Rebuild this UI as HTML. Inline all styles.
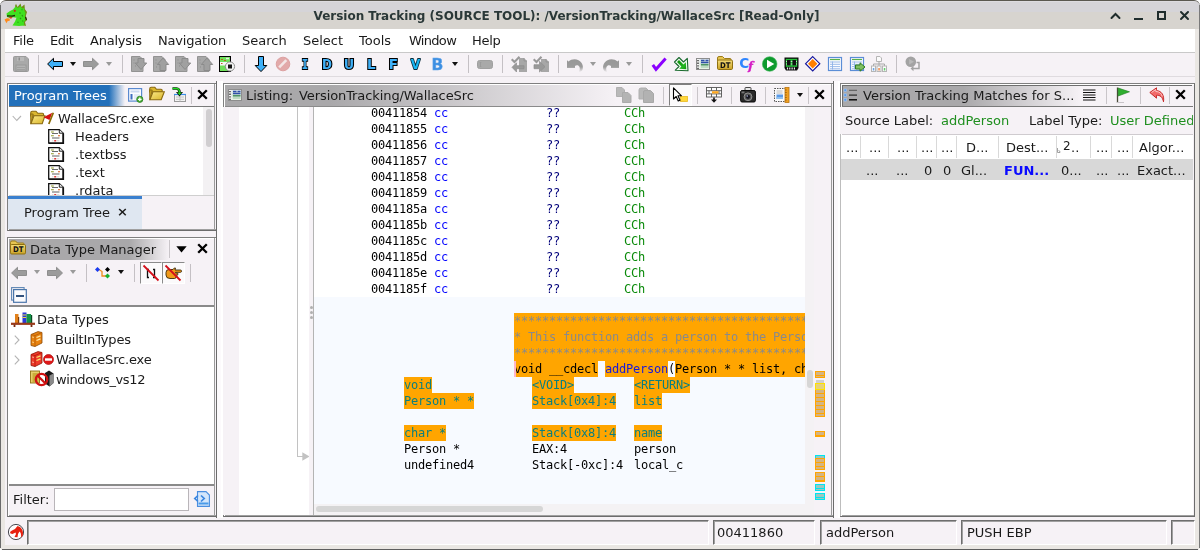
<!DOCTYPE html>
<html>
<head>
<meta charset="utf-8">
<title>Version Tracking (SOURCE TOOL)</title>
<style>
*{box-sizing:border-box;margin:0;padding:0}
html,body{width:1200px;height:550px;overflow:hidden;background:#fff}
body{position:relative;font-family:"DejaVu Sans","Liberation Sans",sans-serif;font-size:13px;color:#1a1a1a;line-height:16px}
div,span,svg{position:absolute}
svg{overflow:visible}
.t{white-space:pre;will-change:transform}
.mono{font-family:"DejaVu Sans Mono","Liberation Mono",monospace;font-size:12px;letter-spacing:-0.225px;white-space:pre;line-height:16px;will-change:transform}
#titlebar{left:0;top:0;width:1200px;height:29px;background:linear-gradient(#dddce0 0,#dddce0 1px,#d5d4d8 1px,#d5d4d8 11px,#d7d4cf 11px,#d7d4cf 100%);border-top:1px solid #5a5850;border-radius:6px 6px 0 0}
#title{left:0;width:1133px;top:8px;text-align:center;font-weight:bold;color:#2a3838;font-size:12px;letter-spacing:-0.020px}
#menubar{left:5px;top:29px;width:1190px;height:23px;background:#fff}
#menuline{left:5px;top:52px;width:1190px;height:1px;background:#c9c9c9}
#toolbar{left:5px;top:53px;width:1190px;height:24px;background:#f6f2f6}
.menu{top:4px}
.vsep{width:1px;background:#c4c0c4;top:55px;height:18px}
.ic{width:16px;height:16px;top:56px}
.dd{width:0;height:0;border-left:3px solid transparent;border-right:3px solid transparent;border-top:4px solid #111;top:62px}
.dd.g{border-top-color:#9a9a9a}
.pn{background:#f6f2f6;border-top:1px solid #7f7f7f;border-left:1px solid #7f7f7f;border-right:1px solid #6c6c6c;border-bottom:1px solid #6c6c6c;box-shadow:inset 1px 1px 0 #fff,inset 0 -1px 0 #a0a0a0}
.white{background:#fff}
.sf{top:520px;height:25px;background:#f6f2f6;border-top:1px solid #6e6e6e;border-left:1px solid #6e6e6e;border-right:1px solid #fff;border-bottom:1px solid #fff;box-shadow:inset 1px 1px 0 #a0a0a0}
</style>
</head>
<body>
<!-- window borders -->
<div style="left:0;top:6px;width:1200px;height:544px;background:#eae7e3;border-radius:0 0 3px 3px"></div>
<div style="left:5px;top:29px;width:1190px;height:516px;background:#f6f2f6"></div>

<div id="titlebar"></div>
<div style="left:0;top:5px;width:1px;height:543px;background:#6a6a6a"></div>
<div style="left:1199px;top:5px;width:1px;height:543px;background:#7a7a7a"></div>
<div style="left:2px;top:549px;width:1196px;height:1px;background:#5e5e5e"></div>
<div id="title" class="t">Version Tracking (SOURCE TOOL): /VersionTracking/WallaceSrc [Read-Only]</div>

<div id="menubar">
<span class="menu t" style="left:8px;letter-spacing:-0.250px">File</span>
<span class="menu t" style="left:45px;letter-spacing:-0.450px">Edit</span>
<span class="menu t" style="left:85px;letter-spacing:-0.220px">Analysis</span>
<span class="menu t" style="left:153px;letter-spacing:-0.200px">Navigation</span>
<span class="menu t" style="left:237px">Search</span>
<span class="menu t" style="left:298px">Select</span>
<span class="menu t" style="left:354px">Tools</span>
<span class="menu t" style="left:404px;letter-spacing:-0.700px">Window</span>
<span class="menu t" style="left:467px;letter-spacing:-0.300px">Help</span>
</div>
<div id="menuline"></div>
<div id="toolbar"></div>
<!-- window icon + controls -->
<svg style="left:4px;top:3px;width:24px;height:24px" viewBox="0 0 24 24">
<path d="M11 3 L12 0.800 L13.500 4 L16.500 0.500 L17.500 4 L20.500 1.500 L20.800 6 L23 9 L21.800 13 L23 17 L21 19 L22 23 L18 22 Z" fill="#6f8f14"/>
<path d="M2.500 10.500 L6 8 L9 6.500 L11.500 3.500 L14 5 L16.500 3 L18 5.500 L20 5 L20.500 8 L21.500 10 L20.800 13.500 L21.500 17 L19.800 19 L20.300 22.500 L15 23 L8.500 22.600 L11 18.500 L12.500 14.800 L9 14.300 L6 15 L3 14 Z" fill="#3fe01f"/>
<path d="M3 12.800 L8 13.200 L11 12.500" fill="none" stroke="#1a2a0a" stroke-width="1.300"/>
<path d="M4.500 13.800 L8.500 14 L7 16 Z" fill="#d8401a"/>
<path d="M0.500 16.500 L3 15.200 L5.500 15.500 L6 17.500 L3.500 18.200 L2.500 20.300 Z" fill="#ff8a1a"/>
<circle cx="10.800" cy="7.800" r="1.100" fill="#c8281a"/>
<path d="M15.500 9.500l1 1M18 12l0.800 1.500M16 15l1 1M13.500 19l1 0.500M18.500 17.500l0.500 1M17.500 6.500l1 0.500" stroke="#2a9a12" stroke-width="1.200"/>
<path d="M21.500 14 l1 3" stroke="#1a1a0a" stroke-width="1.100"/>
</svg>
<svg style="left:1110px;top:11px;width:80px;height:10px" viewBox="0 0 80 10" fill="none" stroke="#1f2d2d" stroke-width="2">
<path d="M1.5 7 L5.5 3 L9.500 7" stroke-linecap="round" stroke-linejoin="miter"/>
<path d="M24 8 H33"/>
<rect x="48" y="1" width="7" height="7"/>
<path d="M71 1 L78 8 M78 1 L71 8" stroke-linecap="round"/>
</svg>
<!-- TOOLBAR -->
<div style="left:5px;top:76px;width:1190px;height:1px;background:#dfdbdf"></div>
<!-- save -->
<svg class="ic" style="left:13px" viewBox="0 0 16 16"><path d="M0.5 1.5 Q0.5 0.5 1.5 0.5 H13 L15.5 3 V14.5 Q15.5 15.5 14.5 15.5 H1.5 Q0.5 15.5 0.5 14.5Z" fill="#a9a9a9" stroke="#9b9b9b"/><rect x="4" y="1" width="7" height="4" fill="#b9b9b9"/><rect x="5.500" y="1.500" width="1.500" height="3" fill="#8d8d8d"/><rect x="3" y="9" width="10" height="6" fill="#b3b3b3" stroke="#949494" stroke-width="0.800"/><path d="M4 11.500 H12 M4 13.500 H12" stroke="#9a9a9a" stroke-width="0.800"/></svg>
<div class="vsep" style="left:38px"></div>
<!-- back / fwd -->
<svg class="ic" style="left:47px" viewBox="0 0 16 16"><path d="M0.600 8 L6.500 2.300 V5.500 H15.500 V10.500 H6.500 V13.700Z" fill="#3fb0f7" stroke="#000" stroke-width="1" stroke-linejoin="miter"/></svg>
<div class="dd" style="left:70px"></div>
<svg class="ic" style="left:83px" viewBox="0 0 16 16"><path d="M15.500 8 L9.500 2.300 V5.500 H0.500 V10.500 H9.500 V13.700Z" fill="#9c9c9c" stroke="#8e8e8e" stroke-width="1"/></svg>
<div class="dd g" style="left:106px"></div>
<div class="vsep" style="left:122px"></div>
<!-- 4 gray doc arrows -->
<svg class="ic" style="left:131px" viewBox="0 0 16 16"><path d="M0.500 0.500 H9 L12 3.500 V15.500 H0.500Z" fill="#a8a8a8" stroke="#939393"/><path d="M7 2.500 H13 V7 H15.700 L10 13.500 L4.300 7 H7Z" fill="#a0a0a0" stroke="#8b8b8b"/><path d="M2.500 4h1M2.500 7h1M4 10h1" stroke="#8d8d8d"/></svg>
<svg class="ic" style="left:153px" viewBox="0 0 16 16"><path d="M0.500 0.500 H9 L12 3.500 V15.500 H0.500Z" fill="#a8a8a8" stroke="#939393"/><path d="M7 14.500 H13 V8.500 H15.700 L10 2 L4.300 8.500 H7Z" fill="#a0a0a0" stroke="#8b8b8b"/><path d="M2.500 4h1M2.500 7h1M3 11h1" stroke="#8d8d8d"/></svg>
<svg class="ic" style="left:175px" viewBox="0 0 16 16"><path d="M0.500 0.500 H9 L12 3.500 V15.500 H0.500Z" fill="#a8a8a8" stroke="#939393"/><path d="M7 2.500 H13 V7 H15.700 L10 13.500 L4.300 7 H7Z" fill="#a0a0a0" stroke="#8b8b8b"/><path d="M2.500 4h1M2.500 7h1M4 10h1" stroke="#8d8d8d"/></svg>
<svg class="ic" style="left:197px" viewBox="0 0 16 16"><path d="M0.500 0.500 H9 L12 3.500 V15.500 H0.500Z" fill="#a8a8a8" stroke="#939393"/><path d="M7 14.500 H13 V8.500 H15.700 L10 2 L4.300 8.500 H7Z" fill="#a0a0a0" stroke="#8b8b8b"/><path d="M2.500 4h1M2.500 7h1M3 11h1" stroke="#8d8d8d"/></svg>
<!-- green page with stop circle -->
<svg class="ic" style="left:219px" viewBox="0 0 16 16"><rect x="0.500" y="0.500" width="11" height="15" fill="#6fe05a" stroke="#000"/><rect x="1" y="6" width="10" height="3.500" fill="#f4f4f4"/><path d="M2 3.500h2M5 4.500h2M2 7.500h1.500" stroke="#b5651d"/><path d="M7 2.500h3" stroke="#e8e8e8" stroke-width="1.500"/><circle cx="11" cy="10.500" r="4.600" fill="#f4f4f4" stroke="#8c8c8c"/><rect x="9" y="8.500" width="4" height="4" fill="#151515"/></svg>
<div class="vsep" style="left:244px"></div>
<!-- down arrow -->
<svg class="ic" style="left:253px" viewBox="0 0 16 16"><path d="M5.500 0.500 H10.500 V9.500 H13.800 L8 15.600 L2.200 9.500 H5.500Z" fill="#3fb0f7" stroke="#000" stroke-width="1"/></svg>
<!-- no entry -->
<svg class="ic" style="left:275px" viewBox="0 0 16 16"><circle cx="8" cy="8" r="6.800" fill="#e2a9a9" stroke="#dba0a0"/><path d="M4.200 11.300 L11.300 4.200" stroke="#f3e6e6" stroke-width="2.600"/></svg>
<!-- letters -->
<svg class="ic" style="left:297px" viewBox="0 0 16 16"><text x="8" y="13" text-anchor="middle" font-family="Liberation Mono,monospace" font-weight="bold" font-size="15.200" fill="#3fb0f7" stroke="#000" stroke-width="2" paint-order="stroke" stroke-linejoin="miter" textLength="6.500" lengthAdjust="spacingAndGlyphs">I</text></svg>
<svg class="ic" style="left:319px" viewBox="0 0 16 16"><text x="8" y="13" text-anchor="middle" font-family="Liberation Mono,monospace" font-weight="bold" font-size="15.200" fill="#3fb0f7" stroke="#000" stroke-width="2" paint-order="stroke" stroke-linejoin="miter" textLength="10" lengthAdjust="spacingAndGlyphs">D</text></svg>
<svg class="ic" style="left:341px" viewBox="0 0 16 16"><text x="8" y="13" text-anchor="middle" font-family="Liberation Mono,monospace" font-weight="bold" font-size="15.200" fill="#3fb0f7" stroke="#000" stroke-width="2" paint-order="stroke" stroke-linejoin="miter" textLength="10" lengthAdjust="spacingAndGlyphs">U</text></svg>
<svg class="ic" style="left:363px" viewBox="0 0 16 16"><text x="8.300" y="13" text-anchor="middle" font-family="DejaVu Sans,Liberation Sans,sans-serif" font-weight="bold" font-size="13.500" fill="#3fb0f7" stroke="#000" stroke-width="2" paint-order="stroke" stroke-linejoin="miter">L</text></svg>
<svg class="ic" style="left:385px" viewBox="0 0 16 16"><text x="8.300" y="13" text-anchor="middle" font-family="DejaVu Sans,Liberation Sans,sans-serif" font-weight="bold" font-size="13.500" fill="#3fb0f7" stroke="#000" stroke-width="2" paint-order="stroke" stroke-linejoin="miter">F</text></svg>
<svg class="ic" style="left:407px" viewBox="0 0 16 16"><text x="8.500" y="13" text-anchor="middle" font-family="DejaVu Sans,Liberation Sans,sans-serif" font-weight="bold" font-size="13.500" fill="#19b5f2" stroke="#0a2d3c" stroke-width="1.800" paint-order="stroke" stroke-linejoin="round" textLength="9.500" lengthAdjust="spacingAndGlyphs">V</text></svg>
<svg class="ic" style="left:429px" viewBox="0 0 16 16"><text x="8.500" y="13.500" text-anchor="middle" font-family="DejaVu Sans,Liberation Sans,sans-serif" font-weight="bold" font-size="15.500" fill="#3d8fe2" stroke="#6aa9ea" stroke-width="0.500">B</text></svg>
<div class="dd" style="left:452px"></div>
<div class="vsep" style="left:468px"></div>
<!-- gray rounded rect -->
<svg class="ic" style="left:477px" viewBox="0 0 16 16"><rect x="0.500" y="4.500" width="15" height="8" rx="2" fill="#a9a9a9" stroke="#a0a0a0"/><path d="M3.500 6.500 v4 M2.800 6.500 h1.500 M2.800 10.500 h1.500" stroke="#989898" stroke-width="0.800"/></svg>
<div class="vsep" style="left:502px"></div>
<!-- check/page arrows (gray) -->
<svg class="ic" style="left:511px" viewBox="0 0 16 16"><path d="M8 2 H13 L16 5 V16 H8Z" fill="#a7a7a7"/><path d="M13 2 V5 H16" fill="none" stroke="#929292" stroke-width="0.800"/><path d="M0.700 3.200 L3.500 6 L8.500 0.800" fill="none" stroke="#999" stroke-width="2.100"/><path d="M1 11.300 L5.500 6.800 V9.700 H13 V12.700 H5.500 V16Z" fill="#999" stroke="#8c8c8c" stroke-width="0.700"/></svg>
<svg class="ic" style="left:533px" viewBox="0 0 16 16"><path d="M8 3 H13 L16 6 V16 H8Z" fill="#a7a7a7"/><path d="M13 3 V6 H16" fill="none" stroke="#929292" stroke-width="0.800"/><path d="M0.700 3.200 L3.500 6 L8.500 0.800" fill="none" stroke="#999" stroke-width="2.100"/><path d="M1 8.700 H6.500 V5.300 L12 10.700 L6.500 16 V12.700 H1Z" fill="#999" stroke="#8c8c8c" stroke-width="0.700"/></svg>
<div class="vsep" style="left:558px"></div>
<!-- undo / redo -->
<svg class="ic" style="left:567px;top:59px;width:16px;height:13px" viewBox="0 0 16 13"><defs><linearGradient id="ug" x1="0" y1="0" x2="0" y2="1"><stop offset="0" stop-color="#979797"/><stop offset="0.600" stop-color="#9c9c9c"/><stop offset="1" stop-color="#9c9c9c" stop-opacity="0.050"/></linearGradient></defs><path d="M0 1.200 L1.600 2.600 C4 0.300 8 -0.500 11.500 1.200 C15 3 16.800 7 15.500 10.500 C15 12 14 12.800 12 13 C13.300 10 13 8 11.500 6.800 C10.500 6 9 6.200 8 7 L8 9 L0 9 Z" fill="url(#ug)"/></svg>
<div class="dd g" style="left:590px"></div>
<svg class="ic" style="left:603px;top:59px;width:16px;height:13px" viewBox="0 0 16 13"><path transform="translate(16,0) scale(-1,1)" d="M0 1.200 L1.600 2.600 C4 0.300 8 -0.500 11.500 1.200 C15 3 16.800 7 15.500 10.500 C15 12 14 12.800 12 13 C13.300 10 13 8 11.500 6.800 C10.500 6 9 6.200 8 7 L8 9 L0 9 Z" fill="url(#ug)"/></svg>
<div class="dd g" style="left:626px"></div>
<div class="vsep" style="left:642px"></div>
<!-- purple check -->
<svg class="ic" style="left:651px" viewBox="0 0 16 16"><path d="M1.800 8.800 L5 13.300 L14.600 2.500" fill="none" stroke="#8b00ff" stroke-width="3" stroke-linecap="butt" stroke-linejoin="miter"/></svg>
<!-- green arrow -->
<svg class="ic" style="left:673px" viewBox="0 0 16 16"><defs><linearGradient id="gg" x1="0" y1="0" x2="1" y2="1"><stop offset="0" stop-color="#0a8a0a"/><stop offset="0.700" stop-color="#22b822"/><stop offset="1" stop-color="#0c960c"/></linearGradient></defs><path d="M6 1.500 L10.500 6 L14.300 2.300 L15 14.800 L2.300 14.200 L6 10.500 L1.500 6 Z" fill="#f2fbf0" stroke="#1a6a2e" stroke-width="1.100" stroke-linejoin="round"/><path d="M6 4 L10.500 8.400 L12.800 6.200 L13.300 13.200 L6.200 12.800 L8.400 10.500 L4 6 Z" fill="url(#gg)"/></svg>
<!-- listing icon -->
<svg class="ic" style="left:695px" viewBox="0 0 16 16"><defs><linearGradient id="lg1" x1="0" y1="0" x2="0" y2="1"><stop offset="0" stop-color="#dfe6ee"/><stop offset="0.500" stop-color="#cfe3d6"/><stop offset="1" stop-color="#eef6ea"/></linearGradient></defs><rect x="1.500" y="2.500" width="13" height="11" fill="url(#lg1)" stroke="#8d8d8d"/><rect x="2" y="3" width="2.500" height="10" fill="#f4f4f4"/><path d="M3 4v9" stroke="#111" stroke-width="1.200" stroke-dasharray="1.300 1.300"/><path d="M6 4.500h3.500M10.500 4.500h3M6 6.500h7.500" stroke="#2f4fa8" stroke-width="1.300"/><path d="M6 8.800h7.500" stroke="#3f8a58" stroke-width="1.400"/><path d="M6 11h7.500" stroke="#9cc8a4" stroke-width="1"/></svg>
<!-- DT folder -->
<svg class="ic" style="left:717px" viewBox="0 0 16 16"><defs><linearGradient id="fg1" x1="0" y1="0" x2="0" y2="1"><stop offset="0" stop-color="#f5dc78"/><stop offset="1" stop-color="#c9a227"/></linearGradient></defs><path d="M0.500 2 Q0.500 0.500 2 0.500 H5.500 L7.500 2.500 H13 Q14 2.500 14 3.500 V5 H0.500Z" fill="#e6c552" stroke="#9c7c18"/><rect x="0.500" y="4" width="15" height="9.500" rx="1.200" fill="url(#fg1)" stroke="#8f7012"/><text x="8.200" y="11.800" text-anchor="middle" font-family="DejaVu Sans,Liberation Sans,sans-serif" font-weight="bold" font-size="7.800" fill="#111" textLength="10.500" lengthAdjust="spacingAndGlyphs">DT</text></svg>
<!-- Cf -->
<svg class="ic" style="left:739px" viewBox="0 0 17 16"><text x="0.300" y="12" font-family="DejaVu Sans,Liberation Sans,sans-serif" font-weight="bold" font-size="14.500" fill="#2f86ff">C</text><text x="9.800" y="14" font-family="DejaVu Serif,Liberation Serif,serif" font-style="italic" font-weight="bold" font-size="11.500" fill="#d41cc4" stroke="#d41cc4" stroke-width="0.500">f</text></svg>
<!-- play -->
<svg class="ic" style="left:762px" viewBox="0 0 16 16"><circle cx="7.700" cy="8" r="7.300" fill="#0e9a2e"/><circle cx="7.700" cy="8" r="7.300" fill="none" stroke="#3db558" stroke-width="0.600"/><path d="M5 3.800 L12.300 8 L5 12.200Z" fill="#fff"/></svg>
<!-- memory chip -->
<svg class="ic" style="left:784px" viewBox="0 0 16 16"><path d="M0.500 1.500 H14.500 V12 L13 14.500 H2 L0.500 12Z" fill="#0a0a0a"/><rect x="1.800" y="2.800" width="11.400" height="8" fill="#26c23a"/><rect x="3" y="4" width="3.600" height="5.400" fill="#111"/><rect x="8.400" y="4" width="3.600" height="5.400" fill="#111"/><path d="M2 5.500h1M2 8h1M6.700 5.500h1.600M6.700 8h1.600M12 5.500h1M12 8h1" stroke="#e8e8e8" stroke-width="0.800"/><path d="M3.500 11.500v2M5.800 11.500v2M8.100 11.500v2M10.400 11.500v2" stroke="#f2f2f2" stroke-width="1.200"/></svg>
<!-- diamond -->
<svg class="ic" style="left:805px;top:56px" viewBox="0 0 16 16"><path d="M7.700 0.600 L14.800 7.700 L7.700 14.800 L0.600 7.700Z" fill="#fff" stroke="#17179c" stroke-width="1.200"/><path d="M7.700 3 L12.400 7.700 L7.700 12.400 L3 7.700Z" fill="#ff7f00"/></svg>
<!-- table -->
<svg class="ic" style="left:827px" viewBox="0 0 16 16"><rect x="1.500" y="1.500" width="13" height="13" fill="#fdfdff" stroke="#5b8dd6" stroke-width="1.200"/><path d="M3 3.500h10" stroke="#58b04a" stroke-width="1.200"/><path d="M3 6h10M3 8.300h10M3 10.600h10M3 12.800h10M5.500 5.500v8" stroke="#8fb2e6" stroke-width="0.900"/></svg>
<svg class="ic" style="left:849px" viewBox="0 0 16 16"><rect x="1.500" y="1.500" width="13" height="13" fill="#fdfdff" stroke="#5b8dd6" stroke-width="1.200"/><path d="M3 3.500h10" stroke="#58b04a" stroke-width="1.200"/><path d="M3 6h10M3 8.300h10M3 10.600h10M3 12.800h10M5.500 5.500v8" stroke="#8fb2e6" stroke-width="0.900"/><path d="M6.500 9 H11 V6.800 L16 11 L11 15.200 V13 H6.500Z" fill="#7fbf63" stroke="#2e7d1e" stroke-width="1"/></svg>
<!-- tree -->
<svg class="ic" style="left:871px" viewBox="0 0 16 16"><path d="M5.500 0.500 H9 L10.500 2 V5.500 H5.500Z" fill="#fbfbfb" stroke="#b5b5b5"/><path d="M8 5.500 V8 M2.500 10 V8 H13.500 V10 M8 8 V10" fill="none" stroke="#a8a8a8"/><rect x="0.500" y="10" width="4" height="5.500" fill="#fbfbfb" stroke="#b5b5b5"/><rect x="6" y="10" width="4" height="5.500" fill="#fbfbfb" stroke="#b5b5b5"/><rect x="11.500" y="10" width="4" height="5.500" fill="#fbfbfb" stroke="#b5b5b5"/><rect x="1.800" y="12" width="1.500" height="2.500" fill="#6aa4e8"/><rect x="7.300" y="12" width="1.500" height="2.500" fill="#f08a4a"/><rect x="12.800" y="12" width="1.500" height="2.500" fill="#5fcf6a"/></svg>
<div class="vsep" style="left:896px"></div>
<!-- gray play w/ return arrow -->
<svg class="ic" style="left:905px" viewBox="0 0 16 16"><circle cx="5.800" cy="5.800" r="5.300" fill="#a3a3a3"/><path d="M4.200 3 L9 5.800 L4.200 8.600Z" fill="#b9b9b9"/><path d="M11.500 6.500 H14 V12.500 H7" fill="none" stroke="#a3a3a3" stroke-width="1.500"/><path d="M8.500 9.800 L5.500 12.500 L8.500 15.200Z" fill="#a3a3a3"/></svg>
<!-- ===== PROGRAM TREES PANEL ===== -->
<div class="pn" style="left:7px;top:83px;width:210px;height:148px"></div>
<div class="hd" style="left:9px;top:85px;width:205px;height:21px;background:linear-gradient(90deg,#2270ba 0,#2270ba 100px,#f6f2f6 116px)"></div>
<div style="left:9px;top:106px;width:206px;height:1px;background:#7a7a7a"></div>
<span class="t" style="left:14px;top:88px;color:#fff">Program Trees</span>
<!-- header icons -->
<svg class="ic" style="left:128px;top:88px" viewBox="0 0 16 16"><rect x="0.600" y="0.600" width="13" height="12.500" fill="#fafcff" stroke="#5a8ad0" stroke-width="1.200"/><rect x="2.500" y="2.500" width="9" height="2" fill="#c9d8f0"/><rect x="2.500" y="6" width="2" height="5.500" fill="#3f6fc0"/><rect x="6" y="6" width="5.500" height="5.500" fill="#e4ecf8"/><circle cx="11.800" cy="11.300" r="3.100" fill="#4caf3a" stroke="#2c7d20" stroke-width="0.800"/><path d="M11.800 9.500v3.600M10 11.300h3.600" stroke="#fff" stroke-width="1.300"/></svg>
<svg class="ic" style="left:149px;top:86px" viewBox="0 0 16 16"><path d="M0.700 3 Q0.700 1.300 2.200 1.300 H5.800 L7.500 3.300 H12 Q13.200 3.300 13.200 4.500 V6 H0.700Z" fill="#dcb830" stroke="#8a6a10" stroke-width="1.100"/><path d="M0.700 13.600 V4 H3.200 L1.200 13.600Z" fill="#c9a428" stroke="#8a6a10" stroke-width="0.900"/><path d="M4 5.800 H15.300 L12.200 13.800 H0.900Z" fill="url(#fo1)" stroke="#8a6a10" stroke-width="1.100"/></svg>
<svg class="ic" style="left:171px;top:87px" viewBox="0 0 16 16"><rect x="3.500" y="7.500" width="11" height="7" fill="#f4f4f4" stroke="#9a9a9a"/><path d="M3 7.500 H15" stroke="#3b8eea" stroke-width="1.200"/><path d="M5 10h8M5 12.300h8M9 9v5.500" stroke="#bdbdbd" stroke-width="0.900"/><path d="M1.500 1.500 H5.500 Q8.500 1.500 8.500 5.500" fill="none" stroke="#111" stroke-width="2.600"/><path d="M5 5 H12 L8.500 9.500Z" fill="#111"/><path d="M1.500 1.500 H5.500 Q8.500 1.500 8.500 5.500" fill="none" stroke="#1fdc1f" stroke-width="1.400"/><path d="M6.300 5.500 H10.700 L8.500 8.300Z" fill="#1fdc1f"/></svg>
<div style="left:191px;top:87px;width:1px;height:17px;background:#c9c5c9"></div>
<svg style="left:197px;top:89px;width:11px;height:11px" viewBox="0 0 11 11"><path d="M1.200 1.200 L9.800 9.800 M9.800 1.200 L1.200 9.800" stroke="#000" stroke-width="2.300"/></svg>
<!-- tree -->
<div class="white" style="left:9px;top:107px;width:206px;height:88px"></div>
<div style="left:9px;top:195px;width:206px;height:1px;background:#cfcfcf"></div>
<svg style="left:12px;top:115px;width:10px;height:7px" viewBox="0 0 10 7"><path d="M0.700 1 L4.800 5.500 L9 1" fill="none" stroke="#b4b4b4" stroke-width="1.100"/></svg>
<svg style="left:30px;top:110px;width:25px;height:16px" viewBox="0 0 25 16"><defs><linearGradient id="fo1" x1="0" y1="0" x2="1" y2="1"><stop offset="0" stop-color="#fbe98a"/><stop offset="1" stop-color="#d8b428"/></linearGradient></defs><path d="M0.700 3 Q0.700 1.200 2.300 1.200 H6 L7.800 3.300 H12.500 Q13.600 3.300 13.600 4.500 V6 H0.700Z" fill="#dcb830" stroke="#8a6a10" stroke-width="1.100"/><path d="M0.700 13.600 V4 H3.200 L1.200 13.600Z" fill="#c9a428" stroke="#8a6a10" stroke-width="0.900"/><path d="M4 5.800 H15 L12.200 13.800 H0.900Z" fill="url(#fo1)" stroke="#8a6a10" stroke-width="1.100"/><path d="M13.500 7.300 L22.300 2.800 L19.500 10Z" fill="#d41212"/><path d="M23.300 2.800 L18.800 14" stroke="#8a6a00" stroke-width="1.700"/></svg>
<span class="t" style="left:58px;top:111px;letter-spacing:-0.120px">WallaceSrc.exe</span>
<svg class="doc" style="left:48px;top:129px;width:16px;height:15px" viewBox="0 0 16 15"><path d="M0.700 0.700 H11.300 L15.200 4.200 V14.200 H0.700Z" fill="#fff" stroke="#111" stroke-width="1.300"/><path d="M1 14.300 H15.300 V4.500" fill="none" stroke="#111" stroke-width="1.600"/><path d="M11.300 0.700 V4.200 H15.200" fill="#f0f0f0" stroke="#111" stroke-width="0.900"/><path d="M3 3h2.800M3 6.800h2.800" stroke="#8f9a2a" stroke-width="1.100"/><path d="M4 4.500h6" stroke="#5a5a5a" stroke-width="0.900"/><path d="M10 6.800h2" stroke="#d45a1a" stroke-width="1.100"/><path d="M4 9h7.500" stroke="#a8a8a8" stroke-width="1.800"/><path d="M4 11.800h1.500M8.800 11.800h2.500" stroke="#cfcfcf" stroke-width="0.900"/><path d="M6.200 11.800h2" stroke="#d81a1a" stroke-width="1.300"/></svg>
<span class="t" style="left:75px;top:129px">Headers</span>
<svg class="doc" style="left:48px;top:147px;width:16px;height:15px" viewBox="0 0 16 15"><path d="M0.700 0.700 H11.300 L15.200 4.200 V14.200 H0.700Z" fill="#fff" stroke="#111" stroke-width="1.300"/><path d="M1 14.300 H15.300 V4.500" fill="none" stroke="#111" stroke-width="1.600"/><path d="M11.300 0.700 V4.200 H15.200" fill="#f0f0f0" stroke="#111" stroke-width="0.900"/><path d="M3 3h2.800M3 6.800h2.800" stroke="#8f9a2a" stroke-width="1.100"/><path d="M4 4.500h6" stroke="#5a5a5a" stroke-width="0.900"/><path d="M10 6.800h2" stroke="#d45a1a" stroke-width="1.100"/><path d="M4 9h7.500" stroke="#a8a8a8" stroke-width="1.800"/><path d="M4 11.800h1.500M8.800 11.800h2.500" stroke="#cfcfcf" stroke-width="0.900"/><path d="M6.200 11.800h2" stroke="#d81a1a" stroke-width="1.300"/></svg>
<span class="t" style="left:75px;top:147px">.textbss</span>
<svg class="doc" style="left:48px;top:165px;width:16px;height:15px" viewBox="0 0 16 15"><path d="M0.700 0.700 H11.300 L15.200 4.200 V14.200 H0.700Z" fill="#fff" stroke="#111" stroke-width="1.300"/><path d="M1 14.300 H15.300 V4.500" fill="none" stroke="#111" stroke-width="1.600"/><path d="M11.300 0.700 V4.200 H15.200" fill="#f0f0f0" stroke="#111" stroke-width="0.900"/><path d="M3 3h2.800M3 6.800h2.800" stroke="#8f9a2a" stroke-width="1.100"/><path d="M4 4.500h6" stroke="#5a5a5a" stroke-width="0.900"/><path d="M10 6.800h2" stroke="#d45a1a" stroke-width="1.100"/><path d="M4 9h7.500" stroke="#a8a8a8" stroke-width="1.800"/><path d="M4 11.800h1.500M8.800 11.800h2.500" stroke="#cfcfcf" stroke-width="0.900"/><path d="M6.200 11.800h2" stroke="#d81a1a" stroke-width="1.300"/></svg>
<span class="t" style="left:75px;top:165px">.text</span>
<div style="left:9px;top:180px;width:200px;height:15px;overflow:hidden">
<svg class="doc" style="left:39px;top:3px;width:16px;height:15px" viewBox="0 0 16 15"><path d="M0.700 0.700 H11.300 L15.200 4.200 V14.200 H0.700Z" fill="#fff" stroke="#111" stroke-width="1.300"/><path d="M1 14.300 H15.300 V4.500" fill="none" stroke="#111" stroke-width="1.600"/><path d="M11.300 0.700 V4.200 H15.200" fill="#f0f0f0" stroke="#111" stroke-width="0.900"/><path d="M3 3h2.800M3 6.800h2.800" stroke="#8f9a2a" stroke-width="1.100"/><path d="M4 4.500h6" stroke="#5a5a5a" stroke-width="0.900"/><path d="M10 6.800h2" stroke="#d45a1a" stroke-width="1.100"/><path d="M4 9h7.500" stroke="#a8a8a8" stroke-width="1.800"/><path d="M4 11.800h1.500M8.800 11.800h2.500" stroke="#cfcfcf" stroke-width="0.900"/><path d="M6.200 11.800h2" stroke="#d81a1a" stroke-width="1.300"/></svg>
<span class="t" style="left:66px;top:3px">.rdata</span>
</div>
<!-- scrollbar -->
<div style="left:203px;top:107px;width:11px;height:88px;background:#f3f1f3"></div>
<div style="left:206px;top:109px;width:6px;height:38px;border-radius:3px;background:#d0ced0"></div>
<!-- tab -->
<div style="left:8px;top:196px;width:134px;height:3px;background:#3a80cf"></div>
<div style="left:8px;top:199px;width:134px;height:30px;background:#dfe7f1"></div>
<span class="t" style="left:24px;top:205px">Program Tree</span>
<span class="t" style="left:117px;top:204px;font-weight:bold;font-size:13px">×</span>
<!-- ===== DATA TYPE MANAGER PANEL ===== -->
<div class="pn" style="left:7px;top:237px;width:210px;height:280px"></div>
<div class="hd" style="left:9px;top:239px;width:205px;height:21px;background:linear-gradient(90deg,#a9a8aa 0,#a9a8aa 120px,#f6f2f6 160px)"></div>
<svg class="ic" style="left:10px;top:240px;width:16px;height:16px" viewBox="0 0 16 16"><path d="M0.500 2.500 Q0.500 1 2 1 H5.500 L7.500 3 H13 Q14 3 14 4 V5.500 H0.500Z" fill="#e6c552" stroke="#9c7c18"/><rect x="0.500" y="4.500" width="15" height="9.500" rx="1.200" fill="url(#fg1)" stroke="#8f7012"/><text x="8.200" y="12.300" text-anchor="middle" font-family="DejaVu Sans,Liberation Sans,sans-serif" font-weight="bold" font-size="7.800" fill="#111" textLength="10.500" lengthAdjust="spacingAndGlyphs">DT</text></svg>
<span class="t" style="left:30px;top:242px">Data Type Manager</span>
<div style="left:169px;top:240px;width:1px;height:18px;background:#c9c5c9"></div>
<svg style="left:176px;top:246px;width:11px;height:7px" viewBox="0 0 11 7"><path d="M0.300 0.300 H10.700 L5.500 6.600Z" fill="#000"/></svg>
<svg style="left:197px;top:243px;width:11px;height:11px" viewBox="0 0 11 11"><path d="M1.200 1.200 L9.800 9.800 M9.800 1.200 L1.200 9.800" stroke="#000" stroke-width="2.300"/></svg>
<!-- toolbar row 1 -->
<svg class="ic" style="left:11px;top:265px" viewBox="0 0 16 16"><path d="M0.600 8 L6.500 2.300 V5.500 H15.500 V10.500 H6.500 V13.700Z" fill="#9c9c9c" stroke="#8e8e8e"/></svg>
<div class="dd g" style="left:34px;top:270px"></div>
<svg class="ic" style="left:47px;top:265px" viewBox="0 0 16 16"><path d="M15.500 8 L9.500 2.300 V5.500 H0.500 V10.500 H9.500 V13.700Z" fill="#9c9c9c" stroke="#8e8e8e"/></svg>
<div class="dd g" style="left:70px;top:270px"></div>
<div class="vsep" style="left:86px;top:264px"></div>
<svg class="ic" style="left:95px;top:265px" viewBox="0 0 16 16"><path d="M4 4.500 L7 6.500 V11 H11" fill="none" stroke="#f08a1a" stroke-width="1.300"/><path d="M2.500 2 L5 4.500 L2.500 7 L0 4.500Z" fill="#1a3cf0"/><path d="M12.500 2 L15 4.500 L12.500 7 L10 4.500Z" fill="#000"/><path d="M12.500 8.500 L15 11 L12.500 13.500 L10 11Z" fill="#18b030"/></svg>
<div class="dd" style="left:118px;top:270px"></div>
<div class="vsep" style="left:134px;top:264px"></div>
<!-- toggles -->
<div style="left:140px;top:262px;width:22px;height:22px;background:#fbfafb;border-top:1px solid #8a8a8a;border-left:1px solid #8a8a8a;border-right:1px solid #fff;border-bottom:1px solid #fff"></div>
<svg style="left:143px;top:265px;width:16px;height:16px" viewBox="0 0 16 16"><path d="M6 4.500 H4.500 V12.500 H6 M10 4.500 H11.500 V12.500 H10" fill="none" stroke="#111" stroke-width="1.300"/><path d="M0.500 0.500 L15.500 15.500" stroke="#d40f1a" stroke-width="1.800"/></svg>
<div style="left:162px;top:262px;width:23px;height:22px;background:#fbfafb;border-top:1px solid #8a8a8a;border-left:1px solid #8a8a8a;border-right:1px solid #fff;border-bottom:1px solid #fff"></div>
<svg style="left:165px;top:265px;width:17px;height:16px" viewBox="0 0 17 16"><path d="M1 7.500 Q1 4.500 4 4.500 H8 Q9 2.500 10.500 3 L10 5 H15.500 Q16.500 5 16.500 6.200 Q16.500 7.300 15.500 7.300 H10.500 V8 H12 Q13 8 13 9 T12 10 H11.500 Q12.300 10.300 12 11.200 T11 12 Q11 13.500 9.500 13.500 H5 Q1 13.500 1 10Z" fill="#f09a1a" stroke="#3a2a0a" stroke-width="0.900"/><path d="M0.500 0.500 L15.500 15.500" stroke="#d40f1a" stroke-width="1.800"/></svg>
<div class="vsep" style="left:190px;top:264px"></div>
<!-- toolbar row 2: collapse -->
<svg class="ic" style="left:11px;top:287px" viewBox="0 0 16 16"><rect x="0.600" y="0.600" width="12.500" height="12.500" fill="#f6f2f6" stroke="#5f86b4" stroke-width="1.100"/><rect x="2.600" y="2.600" width="12.700" height="12.700" fill="#fbfbfd" stroke="#4a76aa" stroke-width="1.200"/><path d="M5 9 H13" stroke="#1b3f70" stroke-width="1.800"/></svg>
<!-- tree -->
<div style="left:9px;top:305px;width:206px;height:2px;background:#8a8a8a"></div>
<div class="white" style="left:9px;top:307px;width:206px;height:177px"></div>
<!-- bookshelf -->
<svg style="left:11px;top:312px;width:24px;height:15px" viewBox="0 0 24 15"><rect x="4" y="2" width="3.500" height="9" fill="#e2801a"/><rect x="7" y="5" width="1.200" height="6" fill="#7a3a0a"/><rect x="11.500" y="0.500" width="4" height="10.500" fill="#2a3ad8"/><path d="M11.500 3h4M11.500 5.500h4" stroke="#e8d84a" stroke-width="1"/><rect x="15.500" y="2" width="4.500" height="9" fill="#15934a"/><rect x="20" y="3" width="1.200" height="8" fill="#0a4a22"/><path d="M0 11.800 H24" stroke="#9a3a1a" stroke-width="2.200"/><path d="M3.500 12.500 V15 M20.500 12.500 V15" stroke="#7a2a10" stroke-width="1.800"/></svg>
<span class="t" style="left:37px;top:312px">Data Types</span>
<svg style="left:14px;top:335px;width:6px;height:10px" viewBox="0 0 6 10"><path d="M0.800 0.700 L5 5 L0.800 9.300" fill="none" stroke="#b4b4b4" stroke-width="1.100"/></svg>
<svg style="left:30px;top:331px;width:13px;height:16px" viewBox="0 0 13 16"><path d="M1 3.500 L8 0.600 L12 1.500 V12 L5 15.500 L1 14.500Z" fill="#e8820f" stroke="#8a4a08" stroke-width="0.800"/><path d="M1 3.500 L5 4.500 V15.500 M5 4.500 L12 1.500" fill="none" stroke="#b8600a" stroke-width="0.900"/><path d="M6.500 6.500 L10.500 4.800 M6.500 9.500 L10.500 7.800" stroke="#ffe9a8" stroke-width="1.300"/><path d="M2 6 l2 0.500 M2 11 l2 0.500" stroke="#f8d48a" stroke-width="0.900"/></svg>
<span class="t" style="left:55px;top:332px;letter-spacing:-0.200px">BuiltInTypes</span>
<svg style="left:14px;top:355px;width:6px;height:10px" viewBox="0 0 6 10"><path d="M0.800 0.700 L5 5 L0.800 9.300" fill="none" stroke="#b4b4b4" stroke-width="1.100"/></svg>
<svg style="left:30px;top:351px;width:13px;height:16px" viewBox="0 0 13 16"><path d="M1 3.500 L8 0.600 L12 1.500 V12 L5 15.500 L1 14.500Z" fill="#ee3a2a" stroke="#8a1408" stroke-width="0.800"/><path d="M1 3.500 L5 4.500 V15.500 M5 4.500 L12 1.500" fill="none" stroke="#b81a0a" stroke-width="0.900"/><path d="M6.500 6.500 L10.500 4.800 M6.500 9.500 L10.500 7.800" stroke="#f4e06a" stroke-width="1.300"/><path d="M2 6 l2 0.500 M2 11 l2 0.500" stroke="#f8b4a0" stroke-width="0.900"/></svg>
<svg style="left:43px;top:354px;width:11px;height:11px" viewBox="0 0 11 11"><circle cx="5.500" cy="5.500" r="5" fill="#e01818" stroke="#a80c0c" stroke-width="0.700"/><rect x="2" y="4.300" width="7" height="2.400" fill="#fff"/></svg>
<span class="t" style="left:56px;top:352px;letter-spacing:-0.180px">WallaceSrc.exe</span>
<svg style="left:30px;top:370px;width:25px;height:17px" viewBox="0 0 25 17"><rect x="0.500" y="1" width="9" height="12" fill="#e6cf6a" stroke="#8f7012" stroke-width="0.900"/><rect x="2.500" y="3" width="6" height="9" fill="#c9ad3a"/><path d="M15 3 L19 0.500 L23.500 3.500 V13 L19.500 16.500 L15 13.500Z" fill="#1a1a1a"/><path d="M19.500 5.500 L23.500 3.500 V13 L19.500 16.500Z" fill="#8a8a8a"/><circle cx="11.500" cy="9.500" r="5.700" fill="none" stroke="#d01212" stroke-width="2.300"/><path d="M7.500 5.500 L15.500 13.500" stroke="#d01212" stroke-width="2.300"/></svg>
<span class="t" style="left:56px;top:372px;letter-spacing:-0.380px">windows_vs12</span>
<!-- filter -->
<div style="left:9px;top:484px;width:206px;height:2px;background:#8a8a8a"></div>
<span class="t" style="left:13px;top:492px">Filter:</span>
<div style="left:54px;top:488px;width:135px;height:23px;background:#fff;border:1px solid #b9b5b9"></div>
<svg class="ic" style="left:194px;top:491px;width:16px;height:16px" viewBox="0 0 16 16"><path d="M3.500 0.600 H12 L15.400 4 V15.400 H3.500Z" fill="#d4e6fb" stroke="#4a8ee0" stroke-width="1.100"/><path d="M4.500 12.500 H14.500" stroke="#4a9ae8" stroke-width="2"/><path d="M4 4.500 L0.800 7.500 L4 10.500 M7 4.500 L10.200 7.500 L7 10.500" fill="none" stroke="#3a86e0" stroke-width="1.700"/></svg>
<!-- ===== LISTING PANEL ===== -->
<div class="pn" style="left:223px;top:83px;width:611px;height:434px"></div>
<div class="hd" style="left:225px;top:85px;width:606px;height:21px;background:linear-gradient(90deg,#a9a8aa 0,#a9a8aa 105px,#f6f2f6 392px)"></div>
<div style="left:225px;top:106px;width:607px;height:1px;background:#8a8a8a"></div>
<svg class="ic" style="left:227px;top:87px" viewBox="0 0 16 16"><rect x="1.500" y="2.500" width="13" height="11" fill="url(#lg1)" stroke="#8d8d8d"/><rect x="2" y="3" width="2.500" height="10" fill="#f4f4f4"/><path d="M3 4v9" stroke="#111" stroke-width="1.200" stroke-dasharray="1.300 1.300"/><path d="M6 4.500h3.500M10.500 4.500h3M6 6.500h7.500" stroke="#2f4fa8" stroke-width="1.300"/><path d="M6 8.800h7.500" stroke="#3f8a58" stroke-width="1.400"/><path d="M6 11h7.500" stroke="#9cc8a4" stroke-width="1"/></svg>
<span class="t" style="left:246px;top:88px">Listing: </span><span class="t" style="left:299px;top:88px;letter-spacing:-0.090px">VersionTracking/WallaceSrc</span>
<svg class="ic" style="left:616px;top:87px" viewBox="0 0 16 16"><path d="M0.500 0.500 H6 L8.500 3 V9.500 H0.500Z" fill="#b9b9b9" stroke="#b0b0b0"/><path d="M6.500 5.500 H12 L15 8.500 V15.500 H6.500Z" fill="#b4b4b4" stroke="#ababab"/></svg>
<svg class="ic" style="left:638px;top:87px" viewBox="0 0 16 16"><path d="M1 3 Q1 1 3 1 H8 L10 3 V12 H1Z" fill="#b9b9b9" stroke="#b0b0b0"/><path d="M5.500 5 Q5.500 3.500 7 3.500 H12.500 L15.500 6.500 V15.500 H5.500Z" fill="#b2b2b2" stroke="#a8a8a8"/></svg>
<div style="left:663px;top:87px;width:1px;height:17px;background:#c9c5c9"></div>
<div style="left:669px;top:84px;width:23px;height:22px;background:#fbfafb;border-top:1px solid #7f7f7f;border-left:1px solid #7f7f7f;border-right:1px solid #fff;border-bottom:1px solid #fff"></div>
<svg class="ic" style="left:672px;top:87px" viewBox="0 0 16 16"><rect x="8.500" y="9.500" width="7" height="5" fill="#ffd83a" stroke="#e8b820" stroke-width="0.800"/><path d="M1.500 0.800 V12 L4.200 9.500 L6.200 14 L8 13.200 L6 8.800 H9.500Z" fill="#fff" stroke="#000" stroke-width="1.100" stroke-linejoin="round"/></svg>
<div style="left:697px;top:87px;width:1px;height:17px;background:#c9c5c9"></div>
<svg class="ic" style="left:706px;top:87px" viewBox="0 0 16 16"><rect x="0.500" y="0.500" width="15" height="9.500" fill="#fdfdfd" stroke="#555" stroke-width="0.900"/><path d="M0.500 3.700 H15.500 M0.500 6.900 H15.500 M5.500 0.500 V3.700 M10.500 0.500 V3.700 M3 3.700 V6.900 M13 3.700 V6.900 M5.500 6.900 V10 M10.500 6.900 V10" stroke="#555" stroke-width="0.900"/><rect x="6" y="4.200" width="6.500" height="2.300" fill="#ffa820"/><path d="M8 10.500 V13" stroke="#111" stroke-width="1.600"/><path d="M5 12.500 H11 L8 15.800Z" fill="#111"/></svg>
<div style="left:731px;top:87px;width:1px;height:17px;background:#c9c5c9"></div>
<svg class="ic" style="left:740px;top:87px" viewBox="0 0 16 16"><rect x="5" y="0.500" width="6" height="3.500" rx="0.800" fill="#e8e8e8" stroke="#333" stroke-width="0.900"/><rect x="0.600" y="3.500" width="14.800" height="11.500" rx="1.500" fill="#2a2a2a" stroke="#0a0a0a"/><rect x="1.500" y="4.500" width="3" height="1.800" fill="#777"/><circle cx="8" cy="9.800" r="3.900" fill="#555" stroke="#9a9a9a" stroke-width="0.900"/><circle cx="8" cy="9.800" r="2.100" fill="#15151f"/><circle cx="7.200" cy="9" r="0.700" fill="#cfd8ff"/></svg>
<div style="left:765px;top:87px;width:1px;height:17px;background:#c9c5c9"></div>
<svg class="ic" style="left:774px;top:87px" viewBox="0 0 16 16"><rect x="0.500" y="1.500" width="11" height="13" fill="#fafafa" stroke="#444" stroke-width="0.900" stroke-dasharray="1.500 1"/><path d="M2.500 4h6M2.500 6h6" stroke="#b4b4b4" stroke-width="0.900"/><rect x="2.500" y="7.500" width="6.500" height="4.500" fill="#5a9ae8"/><rect x="2.500" y="10" width="6.500" height="2" fill="#8fc0f0"/><rect x="11" y="0.500" width="4" height="15" fill="#f0a020" stroke="#b87410" stroke-width="0.800"/><path d="M11 3h1.800M11 5.500h1.800M11 8h1.800M11 10.500h1.800M11 13h1.800" stroke="#8a5408" stroke-width="0.700"/></svg>
<div class="dd" style="left:797px;top:93px"></div>
<div style="left:808px;top:87px;width:1px;height:17px;background:#c9c5c9"></div>
<svg style="left:814px;top:89px;width:11px;height:11px" viewBox="0 0 11 11"><path d="M1.200 1.200 L9.800 9.800 M9.800 1.200 L1.200 9.800" stroke="#000" stroke-width="2.300"/></svg>
<div class="white" style="left:239px;top:107px;width:575px;height:408px"></div>
<div style="left:314px;top:297px;width:491px;height:207px;background:#f7faff"></div>
<div style="left:297px;top:107px;width:1px;height:350px;background:#c2c2c2"></div>
<div style="left:297px;top:456px;width:6px;height:1px;background:#c2c2c2"></div>
<svg style="left:302px;top:452px;width:8px;height:9px" viewBox="0 0 8 9"><path d="M0.300 0.300 L7.600 4.500 L0.300 8.700Z" fill="#c2c2c2"/></svg>
<div style="left:309px;top:107px;width:5px;height:408px;background:#f6f2f6;border-right:1px solid #b4b4b4"></div>
<div style="left:310px;top:306px;width:3px;height:3px;border-radius:2px;background:#b0b0b0"></div>
<div style="left:310px;top:311px;width:3px;height:3px;border-radius:2px;background:#b0b0b0"></div>
<div style="left:310px;top:316px;width:3px;height:3px;border-radius:2px;background:#b0b0b0"></div>
<div style="left:314px;top:107px;width:491px;height:397px;overflow:hidden">
<span class="mono" style="left:57px;top:-2px;color:#000">00411854</span>
<span class="mono" style="left:120px;top:-2px;color:#0000ff">cc</span>
<span class="mono" style="left:232px;top:-2px;color:#00007a">??</span>
<span class="mono" style="left:310px;top:-2px;color:#0a8a0a">CCh</span>
<span class="mono" style="left:57px;top:14px;color:#000">00411855</span>
<span class="mono" style="left:120px;top:14px;color:#0000ff">cc</span>
<span class="mono" style="left:232px;top:14px;color:#00007a">??</span>
<span class="mono" style="left:310px;top:14px;color:#0a8a0a">CCh</span>
<span class="mono" style="left:57px;top:30px;color:#000">00411856</span>
<span class="mono" style="left:120px;top:30px;color:#0000ff">cc</span>
<span class="mono" style="left:232px;top:30px;color:#00007a">??</span>
<span class="mono" style="left:310px;top:30px;color:#0a8a0a">CCh</span>
<span class="mono" style="left:57px;top:46px;color:#000">00411857</span>
<span class="mono" style="left:120px;top:46px;color:#0000ff">cc</span>
<span class="mono" style="left:232px;top:46px;color:#00007a">??</span>
<span class="mono" style="left:310px;top:46px;color:#0a8a0a">CCh</span>
<span class="mono" style="left:57px;top:62px;color:#000">00411858</span>
<span class="mono" style="left:120px;top:62px;color:#0000ff">cc</span>
<span class="mono" style="left:232px;top:62px;color:#00007a">??</span>
<span class="mono" style="left:310px;top:62px;color:#0a8a0a">CCh</span>
<span class="mono" style="left:57px;top:78px;color:#000">00411859</span>
<span class="mono" style="left:120px;top:78px;color:#0000ff">cc</span>
<span class="mono" style="left:232px;top:78px;color:#00007a">??</span>
<span class="mono" style="left:310px;top:78px;color:#0a8a0a">CCh</span>
<span class="mono" style="left:57px;top:94px;color:#000">0041185a</span>
<span class="mono" style="left:120px;top:94px;color:#0000ff">cc</span>
<span class="mono" style="left:232px;top:94px;color:#00007a">??</span>
<span class="mono" style="left:310px;top:94px;color:#0a8a0a">CCh</span>
<span class="mono" style="left:57px;top:110px;color:#000">0041185b</span>
<span class="mono" style="left:120px;top:110px;color:#0000ff">cc</span>
<span class="mono" style="left:232px;top:110px;color:#00007a">??</span>
<span class="mono" style="left:310px;top:110px;color:#0a8a0a">CCh</span>
<span class="mono" style="left:57px;top:126px;color:#000">0041185c</span>
<span class="mono" style="left:120px;top:126px;color:#0000ff">cc</span>
<span class="mono" style="left:232px;top:126px;color:#00007a">??</span>
<span class="mono" style="left:310px;top:126px;color:#0a8a0a">CCh</span>
<span class="mono" style="left:57px;top:142px;color:#000">0041185d</span>
<span class="mono" style="left:120px;top:142px;color:#0000ff">cc</span>
<span class="mono" style="left:232px;top:142px;color:#00007a">??</span>
<span class="mono" style="left:310px;top:142px;color:#0a8a0a">CCh</span>
<span class="mono" style="left:57px;top:158px;color:#000">0041185e</span>
<span class="mono" style="left:120px;top:158px;color:#0000ff">cc</span>
<span class="mono" style="left:232px;top:158px;color:#00007a">??</span>
<span class="mono" style="left:310px;top:158px;color:#0a8a0a">CCh</span>
<span class="mono" style="left:57px;top:174px;color:#000">0041185f</span>
<span class="mono" style="left:120px;top:174px;color:#0000ff">cc</span>
<span class="mono" style="left:232px;top:174px;color:#00007a">??</span>
<span class="mono" style="left:310px;top:174px;color:#0a8a0a">CCh</span>
<span class="mono" style="left:200px;top:206px;color:#8a8a8a;background:#ffa500;width:300px">************************************************************</span>
<span class="mono" style="left:200px;top:222px;color:#8a8a8a;background:#ffa500;width:300px">* This function adds a person to the Person list.          </span>
<span class="mono" style="left:200px;top:238px;color:#8a8a8a;background:#ffa500;width:300px">************************************************************</span>
<span class="mono" style="left:200px;top:254px;color:#000;background:#ffa500">void __cdecl</span>
<div style="left:200px;top:254px;width:2px;height:16px;background:#ffb6c8"></div>
<span class="mono" style="left:291px;top:254px;color:#1a1ad8;background:#ffa500">addPerson</span>
<span class="mono" style="left:354px;top:254px;color:#000">(</span>
<span class="mono" style="left:361px;top:254px;color:#000;background:#ffa500">Person * * list, char * name)</span>
<span class="mono" style="left:90px;top:270px;color:#0a7f7f;background:#ffa500">void</span>
<span class="mono" style="left:218px;top:270px;color:#0a7f7f;background:#ffa500">&lt;VOID&gt;</span>
<span class="mono" style="left:320px;top:270px;color:#0a7f7f;background:#ffa500">&lt;RETURN&gt;</span>
<span class="mono" style="left:90px;top:286px;color:#0a7f7f;background:#ffa500">Person * *</span>
<span class="mono" style="left:218px;top:286px;color:#0a7f7f;background:#ffa500">Stack[0x4]:4</span>
<span class="mono" style="left:320px;top:286px;color:#0a7f7f;background:#ffa500">list</span>
<span class="mono" style="left:90px;top:318px;color:#0a7f7f;background:#ffa500">char *</span>
<span class="mono" style="left:218px;top:318px;color:#0a7f7f;background:#ffa500">Stack[0x8]:4</span>
<span class="mono" style="left:320px;top:318px;color:#0a7f7f;background:#ffa500">name</span>
<span class="mono" style="left:90px;top:334px;color:#000">Person *</span>
<span class="mono" style="left:218px;top:334px;color:#000">EAX:4</span>
<span class="mono" style="left:320px;top:334px;color:#000">person</span>
<span class="mono" style="left:90px;top:350px;color:#000">undefined4</span>
<span class="mono" style="left:218px;top:350px;color:#000">Stack[-0xc]:4</span>
<span class="mono" style="left:320px;top:350px;color:#000">local_c</span>
</div>
<div style="left:805px;top:107px;width:9px;height:397px;background:#f4f2f4"></div>
<div style="left:807px;top:370px;width:6px;height:18px;border-radius:3px;background:#d6d6d6"></div>
<div style="left:314px;top:504px;width:500px;height:11px;background:#f4f2f4"></div>
<div style="left:316px;top:506px;width:227px;height:6px;border-radius:3px;background:#d6d6d6"></div>
<div style="left:814px;top:107px;width:17px;height:408px;background:#f6f2f6"></div>
<div style="left:815px;top:371px;width:10px;height:7px;border:1px solid #ffa500;background:repeating-linear-gradient(#d4b483 0,#d4b483 3px,#ffa500 3px,#ffa500 4px)"></div>
<div style="left:816px;top:380px;width:8px;height:3px;background:#cfcfcf"></div>
<div style="left:815px;top:389px;width:10px;height:28px;border:1px solid #ffa500;background:repeating-linear-gradient(#d4b483 0,#d4b483 3px,#ffa500 3px,#ffa500 4px)"></div>
<div style="left:815px;top:383px;width:10px;height:7px;border:1px solid #ffe000;background:#e6d27a"></div>
<div style="left:815px;top:431px;width:10px;height:6px;border:1px solid #ffa500;background:repeating-linear-gradient(#d4b483 0,#d4b483 3px,#ffa500 3px,#ffa500 4px)"></div>
<div style="left:815px;top:455px;width:10px;height:4px;border:1px solid #00e5ee;background:repeating-linear-gradient(#9cc8c0 0,#9cc8c0 3px,#00e5ee 3px,#00e5ee 4px)"></div>
<div style="left:815px;top:458px;width:10px;height:12px;border:1px solid #ffa500;background:repeating-linear-gradient(#d4b483 0,#d4b483 3px,#ffa500 3px,#ffa500 4px)"></div>
<div style="left:815px;top:472px;width:10px;height:10px;border:1px solid #ffa500;background:repeating-linear-gradient(#d4b483 0,#d4b483 3px,#ffa500 3px,#ffa500 4px)"></div>
<div style="left:815px;top:484px;width:10px;height:7px;border:1px solid #00e5ee;background:repeating-linear-gradient(#9cc8c0 0,#9cc8c0 3px,#00e5ee 3px,#00e5ee 4px)"></div>
<div style="left:815px;top:493px;width:10px;height:7px;border:1px solid #00e5ee;background:repeating-linear-gradient(#9cc8c0 0,#9cc8c0 3px,#00e5ee 3px,#00e5ee 4px)"></div>
<!-- ===== VERSION TRACKING MATCHES PANEL ===== -->
<div class="pn" style="left:840px;top:83px;width:355px;height:434px"></div>
<div class="hd" style="left:842px;top:85px;width:350px;height:21px;background:linear-gradient(90deg,#a9a8aa 0,#a9a8aa 120px,#f6f2f6 238px);border-top:1px solid #6e6e6e;border-left:1px solid #6e6e6e"></div>
<div style="left:842px;top:106px;width:351px;height:1px;background:#7a7a7a"></div>
<svg class="ic" style="left:843px;top:87px" viewBox="0 0 16 16"><rect x="1" y="2" width="2.600" height="2.600" fill="#5a9ae8" stroke="#a9c8f0" stroke-width="0.600"/><rect x="1" y="6.800" width="2.600" height="2.600" fill="#5a9ae8" stroke="#a9c8f0" stroke-width="0.600"/><rect x="1" y="11.500" width="2.600" height="2.600" fill="#5a9ae8" stroke="#a9c8f0" stroke-width="0.600"/><path d="M6 3.300 H14" stroke="#555" stroke-width="1"/><path d="M6 8.100 H14" stroke="#2a2a2a" stroke-width="1.200"/><path d="M6 12.800 H14" stroke="#000" stroke-width="1.400"/></svg>
<span class="t" style="left:863px;top:88px">Version Tracking Matches for S...</span>
<svg style="left:1083px;top:89px;width:13px;height:12px" viewBox="0 0 13 12"><path d="M0 1H12.500M0 3.500H12.500M0 6H12.500M0 8.500H12.500M0 11H12.500" stroke="#111" stroke-width="1.100"/></svg>
<div style="left:1106px;top:87px;width:1px;height:17px;background:#c9c5c9"></div>
<svg class="ic" style="left:1115px;top:87px" viewBox="0 0 16 16"><path d="M2.500 0.500 V15" stroke="#4a4a3a" stroke-width="1.300"/><path d="M3.200 1 L14.500 4.800 L3.200 9Z" fill="#2fae2f" stroke="#1c7a1c" stroke-width="0.600"/><path d="M1.500 15.500 H9" stroke="#c8c4c8" stroke-width="1"/></svg>
<div style="left:1140px;top:87px;width:1px;height:17px;background:#c9c5c9"></div>
<svg class="ic" style="left:1149px;top:87px" viewBox="0 0 16 16"><path d="M0.800 5.500 L7.500 0.800 V3.600 C12.500 4 15.500 8 14.500 14.800 C13.500 10 11 8 7.500 8.300 V11.200Z" fill="#f26a6a" stroke="#c42020" stroke-width="0.900" stroke-linejoin="round"/><path d="M2.500 5.500 L6.800 2.500 V4.500 C10.500 4.500 12.500 6.500 13.300 9.500" fill="none" stroke="#fbd0d0" stroke-width="0.900"/></svg>
<div style="left:1169px;top:87px;width:1px;height:17px;background:#c9c5c9"></div>
<svg style="left:1175px;top:89px;width:11px;height:11px" viewBox="0 0 11 11"><path d="M1.200 1.200 L9.800 9.800 M9.800 1.200 L1.200 9.800" stroke="#000" stroke-width="2.300"/></svg>
<!-- labels -->
<div style="left:842px;top:107px;width:351px;height:28px;overflow:hidden">
<span class="t" style="left:3px;top:6px">Source Label:</span>
<span class="t" style="left:99px;top:6px;color:#1f8f1f">addPerson</span>
<span class="t" style="left:187px;top:6px">Label Type:</span>
<span class="t" style="left:268px;top:6px;color:#1f8f1f">User Defined</span>
</div>
<!-- table -->
<div style="left:842px;top:134px;width:351px;height:1px;background:#cfcbcf"></div>
<div class="white" style="left:842px;top:135px;width:351px;height:380px"></div>
<div style="left:860px;top:136px;width:1px;height:22px;background:#d9d9d9"></div>
<div style="left:888px;top:136px;width:1px;height:22px;background:#d9d9d9"></div>
<div style="left:916px;top:136px;width:1px;height:22px;background:#d9d9d9"></div>
<div style="left:936px;top:136px;width:1px;height:22px;background:#d9d9d9"></div>
<div style="left:956px;top:136px;width:1px;height:22px;background:#d9d9d9"></div>
<div style="left:998px;top:136px;width:1px;height:22px;background:#d9d9d9"></div>
<div style="left:1056px;top:136px;width:1px;height:22px;background:#d9d9d9"></div>
<div style="left:1090px;top:136px;width:1px;height:22px;background:#d9d9d9"></div>
<div style="left:1111px;top:136px;width:1px;height:22px;background:#d9d9d9"></div>
<div style="left:1132px;top:136px;width:1px;height:22px;background:#d9d9d9"></div>
<span class="t" style="left:846px;top:140px">...</span>
<span class="t" style="left:869px;top:140px">...</span>
<span class="t" style="left:897px;top:140px">...</span>
<span class="t" style="left:921px;top:140px">...</span>
<span class="t" style="left:941px;top:140px">...</span>
<span class="t" style="left:966px;top:140px">D...</span>
<span class="t" style="left:1006px;top:140px">Dest...</span>
<svg style="left:1057px;top:148px;width:4px;height:5px" viewBox="0 0 4 5"><path d="M0.500 0 V4.500 H3 Q3.500 3 1.500 2.500" fill="none" stroke="#8a8a8a" stroke-width="0.800"/></svg>
<span class="t" style="left:1063px;top:138px;font-size:12px">2</span>
<span class="t" style="left:1071px;top:140px">..</span>
<span class="t" style="left:1096px;top:140px">...</span>
<span class="t" style="left:1117px;top:140px">...</span>
<span class="t" style="left:1139px;top:140px">Algor...</span>
<div style="left:842px;top:159px;width:351px;height:21px;background:#d8d8d8"></div>
<span class="t" style="left:866px;top:163px">...</span>
<span class="t" style="left:896px;top:163px">...</span>
<span class="t" style="left:924px;top:163px">0</span>
<span class="t" style="left:943px;top:163px">0</span>
<span class="t" style="left:961px;top:163px">Gl...</span>
<span class="t" style="left:1004px;top:163px;font-weight:bold;color:#0a0aff">FUN...</span>
<span class="t" style="left:1061px;top:163px">0...</span>
<span class="t" style="left:1096px;top:163px">...</span>
<span class="t" style="left:1117px;top:163px">...</span>
<span class="t" style="left:1137px;top:163px">Exact...</span>
<!-- ===== STATUS BAR ===== -->
<svg style="left:8px;top:524px;width:17px;height:17px" viewBox="0 0 17 17"><circle cx="8" cy="8" r="7.600" fill="#fdfcfd" stroke="#1c1c24" stroke-width="0.800"/><path d="M2 8 L4 6.500 L7 5 L9.500 2 L12 3 Q15.800 6 14.800 11.500 L13 13.500 Q13.500 9 11.500 7.500 L10 10 L9.500 13.200 L6.500 13 L8 10 L7.500 8.500 L4.500 10 L2.500 9.500 Z" fill="#e8200f"/></svg>
<div class="sf" style="left:27px;width:682px"></div>
<div class="sf" style="left:713px;width:102px"></div>
<div class="sf" style="left:820px;width:137px"></div>
<div class="sf" style="left:961px;width:206px"></div>
<div class="sf" style="left:1171px;width:24px"></div>
<span class="t" style="left:717px;top:525px">00411860</span>
<span class="t" style="left:826px;top:525px">addPerson</span>
<span class="t" style="left:967px;top:525px">PUSH EBP</span>
<!-- panel edge lines -->
<div style="left:214px;top:84px;width:1px;height:145px;background:#9a9a9a"></div>
<div style="left:216px;top:81px;width:1px;height:437px;background:#6c6c6c"></div>
<div style="left:214px;top:238px;width:1px;height:277px;background:#9a9a9a"></div>
<div style="left:831px;top:84px;width:1px;height:431px;background:#9a9a9a"></div>
<div style="left:833px;top:81px;width:1px;height:437px;background:#6c6c6c"></div>
<!-- split dividers -->
<div style="left:217px;top:81px;width:4px;height:437px;background:#fcfafc"></div>
<div style="left:221px;top:81px;width:2px;height:437px;background:#fff"></div>
<div style="left:223px;top:107px;width:2px;height:408px;background:#f6f2f6"></div>
<div style="left:834px;top:81px;width:4px;height:437px;background:#fcfafc"></div>
<div style="left:838px;top:81px;width:2px;height:437px;background:#fff"></div>
<div style="left:840px;top:107px;width:2px;height:27px;background:#f6f2f6"></div>
<div style="left:840px;top:134px;width:1px;height:382px;background:#bdbdbd"></div>
<div style="left:841px;top:135px;width:1px;height:380px;background:#fff"></div>
<div style="left:841px;top:159px;width:1px;height:21px;background:#d8d8d8"></div>
</body>
</html>
